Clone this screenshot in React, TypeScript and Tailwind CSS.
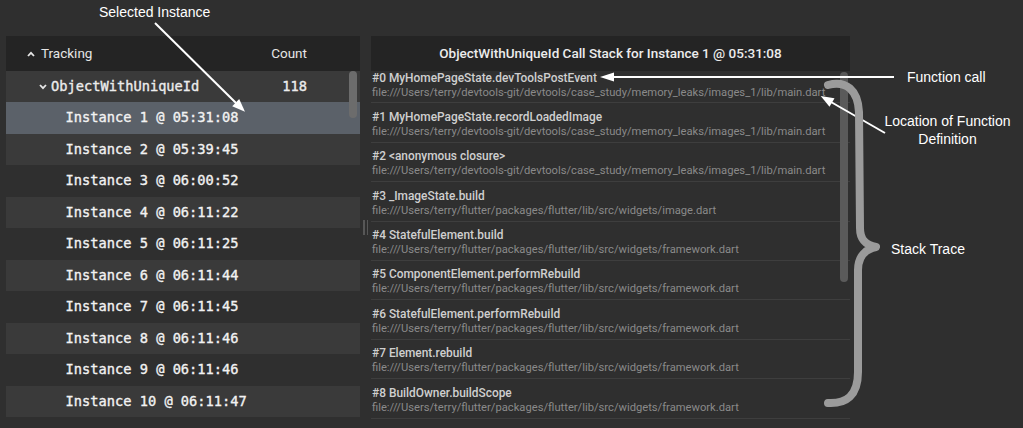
import React from "react";

const instances = [
  "Instance 1 @ 05:31:08",
  "Instance 2 @ 05:39:45",
  "Instance 3 @ 06:00:52",
  "Instance 4 @ 06:11:22",
  "Instance 5 @ 06:11:25",
  "Instance 6 @ 06:11:44",
  "Instance 7 @ 06:11:45",
  "Instance 8 @ 06:11:46",
  "Instance 9 @ 06:11:46",
  "Instance 10 @ 06:11:47",
];

const frames = [
  ["#0 MyHomePageState.devToolsPostEvent", "file:///Users/terry/devtools-git/devtools/case_study/memory_leaks/images_1/lib/main.dart"],
  ["#1 MyHomePageState.recordLoadedImage", "file:///Users/terry/devtools-git/devtools/case_study/memory_leaks/images_1/lib/main.dart"],
  ["#2 <anonymous closure>", "file:///Users/terry/devtools-git/devtools/case_study/memory_leaks/images_1/lib/main.dart"],
  ["#3 _ImageState.build", "file:///Users/terry/flutter/packages/flutter/lib/src/widgets/image.dart"],
  ["#4 StatefulElement.build", "file:///Users/terry/flutter/packages/flutter/lib/src/widgets/framework.dart"],
  ["#5 ComponentElement.performRebuild", "file:///Users/terry/flutter/packages/flutter/lib/src/widgets/framework.dart"],
  ["#6 StatefulElement.performRebuild", "file:///Users/terry/flutter/packages/flutter/lib/src/widgets/framework.dart"],
  ["#7 Element.rebuild", "file:///Users/terry/flutter/packages/flutter/lib/src/widgets/framework.dart"],
  ["#8 BuildOwner.buildScope", "file:///Users/terry/flutter/packages/flutter/lib/src/widgets/framework.dart"],
];

const mono = { fontFamily: "'DejaVu Sans Mono', 'Liberation Mono', monospace" };

export default function App() {
  return (
    <div className="relative w-[1023px] h-[428px] overflow-hidden bg-[#2f2f2f] font-['Roboto',sans-serif]">
      <div className="flex pt-[36px] pl-[6px]">
        {/* Left panel */}
        <div className="w-[354px] flex flex-col">
          <div className="h-[35px] bg-[#242424] flex items-center text-[13.5px] text-[#e6e6e6]">
            <svg width="8" height="6" viewBox="0 0 8 6" className="ml-[21px]">
              <polyline points="1,5 4,1.8 7,5" fill="none" stroke="#e6e6e6" strokeWidth="1.8" />
            </svg>
            <span className="ml-[6px]">Tracking</span>
            <span className="ml-auto mr-[53px]">Count</span>
          </div>
          <div className="relative">
            <div className="h-[31px] bg-[#3a3a3a] flex items-center text-[13.7px] text-[#ececec] [-webkit-text-stroke:0.35px_#ececec]" style={mono}>
              <svg width="8" height="6" viewBox="0 0 8 6" className="ml-[33px]">
                <polyline points="1,1 4,4.2 7,1" fill="none" stroke="#e6e6e6" strokeWidth="1.8" />
              </svg>
              <span className="ml-[4px]">ObjectWithUniqueId</span>
              <span className="ml-auto mr-[53px]">118</span>
            </div>
            {instances.map((t, i) => (
              <div
                key={t}
                className={
                  "h-[31.5px] flex items-center pl-[59.5px] text-[13.7px] text-[#f2f2f2] [-webkit-text-stroke:0.35px_#f2f2f2] " +
                  (i === 0 ? "bg-[#5b6169]" : i % 2 === 1 ? "bg-[#3a3a3a]" : "bg-[#2f2f2f]")
                }
                style={mono}
              >
                {t}
              </div>
            ))}
            <div className="absolute right-[3px] top-0 w-[8px] h-[47px] rounded-full bg-[#6c6c6c]" />
          </div>
        </div>

        {/* Splitter */}
        <div className="w-[11px] flex justify-center gap-[2px] pt-[184px]">
          <div className="w-[1.5px] h-[15px] bg-[#575757]" />
          <div className="w-[1.5px] h-[15px] bg-[#575757]" />
        </div>

        {/* Right panel */}
        <div className="w-[479px] flex flex-col">
          <div className="h-[35px] bg-[#242424] flex items-center justify-center text-[13.5px] font-medium text-[#ececec]">
            ObjectWithUniqueId Call Stack for Instance 1 @ 05:31:08
          </div>
          <div className="relative h-[358px] overflow-hidden">
            <div className="mt-[-7px]">
              {frames.map(([a, b]) => (
                <div key={a} className="h-[39.4px] border-b border-[#3e3e3e] pt-[6.5px] pl-[1px]">
                  <div className="text-[11.9px] leading-[15px] font-medium text-[#cfcfcf] whitespace-nowrap">{a}</div>
                  <div className="text-[11.2px] leading-[13px] text-[#8a8a8a] whitespace-nowrap">{b}</div>
                </div>
              ))}
            </div>
            <div className="absolute right-[2px] top-[1px] w-[8px] h-[210px] rounded-full bg-[#5a5a5a]" />
          </div>
        </div>
      </div>

      {/* Annotations */}
      <svg className="absolute inset-0 pointer-events-none" width="1023" height="428" viewBox="0 0 1023 428">
        <line x1="155" y1="23" x2="236" y2="103" stroke="#ffffff" strokeWidth="2" />
        <polygon points="245,111.7 232.2,106.2 239.2,99" fill="#ffffff" />
        <line x1="612" y1="77" x2="894" y2="77" stroke="#ffffff" strokeWidth="2" />
        <polygon points="600,77 614,72.5 614,81.5" fill="#ffffff" />
        <line x1="885" y1="133" x2="831" y2="102" stroke="#ffffff" strokeWidth="2" />
        <polygon points="820.7,96 834.5,98.2 829.5,106.8" fill="#ffffff" />
        <path
          d="M 828 85 C 846 80, 858 90, 859 112 L 860 228 C 860 240, 866 245, 876 247 C 866 249, 858 256, 858 270 L 858 372 C 858 396, 846 404, 828 403"
          fill="none"
          stroke="#9b9b9b"
          strokeWidth="8"
          strokeLinecap="round"
          strokeLinejoin="round"
        />
      </svg>
      <div className="absolute left-[99px] top-[3px] text-[14px] leading-[18px] text-white font-['Liberation_Sans',sans-serif]">
        Selected Instance
      </div>
      <div className="absolute left-[907px] top-[68px] text-[14px] leading-[18px] text-white font-['Liberation_Sans',sans-serif]">
        Function call
      </div>
      <div className="absolute left-[872px] top-[113px] w-[151px] text-center text-[14px] leading-[17.5px] text-white font-['Liberation_Sans',sans-serif]">
        Location of Function
        <br />
        Definition
      </div>
      <div className="absolute left-[891px] top-[240px] text-[14px] leading-[18px] text-white font-['Liberation_Sans',sans-serif]">
        Stack Trace
      </div>
    </div>
  );
}
